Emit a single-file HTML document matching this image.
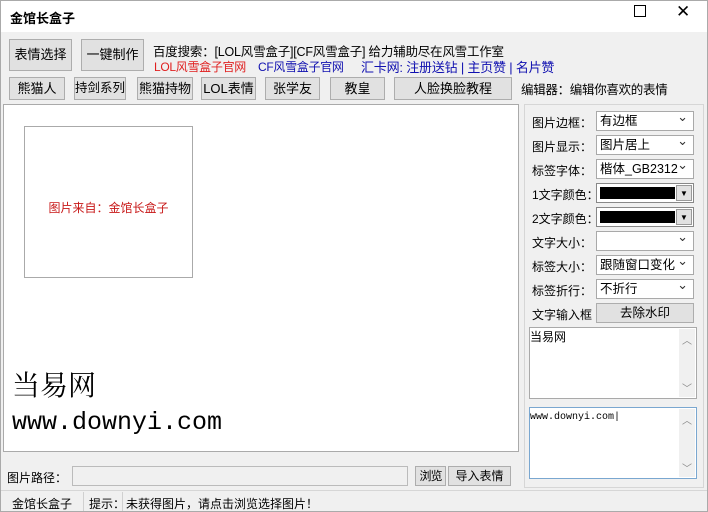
<!DOCTYPE html>
<html><head><meta charset="utf-8"><style>
*{margin:0;padding:0;box-sizing:border-box}
body{width:708px;height:512px;background:#f0f0f0;font-family:"Liberation Sans","Noto Sans CJK SC",sans-serif;font-size:12px;color:#000;position:relative;overflow:hidden}
.a{position:absolute;white-space:nowrap}
.btn{position:absolute;background:#e1e1e1;border:1px solid #adadad;text-align:center;font-size:13px;white-space:nowrap;overflow:visible}
.sel{position:absolute;left:596px;width:98px;height:20px;background:#fff;border:1px solid #a9a9a9;font-size:12.5px;line-height:18px;padding-left:3px;white-space:nowrap}
.sel::after{content:"⌄";position:absolute;right:5px;top:-4px;font-size:13px;color:#333}
.lbl{position:absolute;left:532px;font-size:12px;white-space:nowrap}
.clr{position:absolute;left:596px;width:98px;height:20px;border:1px solid #888;background:#fff;padding:2px}
.clr i{display:block;position:absolute;left:3px;top:3px;width:75px;height:12px;background:#000}
.clr b{position:absolute;right:1px;top:1px;width:16px;height:16px;background:#e1e1e1;border:1px solid #999;font-size:8px;text-align:center;line-height:15px}
.ta{position:absolute;left:529px;width:168px;background:#fff;border:1px solid #a9a9a9}
.sb{position:absolute;right:1px;top:1px;bottom:1px;width:16px;background:#f0f0f0;color:#888;font-size:10px;text-align:center}
</style></head><body>
<div class="a" style="left:0;top:0;width:708px;height:32px;background:#fff"></div>
<div class="a" style="left:0;top:0;width:708px;height:512px;border:1px solid #aaa;pointer-events:none"></div>
<div class="a" style="left:10px;top:8px;font-size:13px;font-weight:bold">金馆长盒子</div>
<div class="a" style="left:634px;top:5px;width:12px;height:12px;border:1px solid #000"></div>
<div class="a" style="left:676px;top:2px;font-size:17px">✕</div>

<div class="btn" style="left:9px;top:39px;width:63px;height:32px;line-height:30px">表情选择</div>
<div class="btn" style="left:81px;top:39px;width:63px;height:32px;line-height:30px">一键制作</div>
<div class="a" style="left:153px;top:41px;font-size:12.5px;letter-spacing:-0.2px">百度搜索：[LOL风雪盒子][CF风雪盒子] 给力辅助尽在风雪工作室</div>
<div class="a" style="left:154px;top:58px;font-size:12px;color:#e02020;letter-spacing:-0.3px">LOL风雪盒子官网</div>
<div class="a" style="left:258px;top:58px;font-size:12px;color:#1010b0;letter-spacing:-0.3px">CF风雪盒子官网</div>
<div class="a" style="left:361px;top:57px;font-size:13px;color:#1010b0;letter-spacing:-0.2px">汇卡网: 注册送钻 | 主页赞 | 名片赞</div>

<div class="btn" style="left:9px;top:77px;width:56px;height:23px;line-height:21px">熊猫人</div>
<div class="btn" style="left:74px;top:77px;width:52px;height:23px;line-height:21px;font-size:12.5px">持剑系列</div>
<div class="btn" style="left:137px;top:77px;width:56px;height:23px;line-height:21px">熊猫持物</div>
<div class="btn" style="left:201px;top:77px;width:55px;height:23px;line-height:21px">LOL表情</div>
<div class="btn" style="left:265px;top:77px;width:55px;height:23px;line-height:21px">张学友</div>
<div class="btn" style="left:330px;top:77px;width:55px;height:23px;line-height:21px">教皇</div>
<div class="btn" style="left:394px;top:77px;width:118px;height:23px;line-height:21px">人脸换脸教程</div>
<div class="a" style="left:521px;top:79px;font-size:12.5px;letter-spacing:-0.3px">编辑器：编辑你喜欢的表情</div>

<div class="a" style="left:3px;top:104px;width:516px;height:348px;background:#fff;border:1px solid #aaa"></div>
<div class="a" style="left:24px;top:126px;width:169px;height:152px;border:1px solid #aaa"></div>
<div class="a" style="left:24px;top:199px;width:169px;text-align:center;color:#c81818;font-size:12px">图片来自：金馆长盒子</div>
<div class="a" style="left:12px;top:364px;font-size:28px;font-family:'Liberation Serif','Noto Serif CJK SC',serif">当易网</div>
<div class="a" style="left:12px;top:408px;font-size:25px;font-family:'Liberation Mono',monospace">www.downyi.com</div>

<div class="a" style="left:524px;top:104px;width:180px;height:384px;border:1px solid #d6d6d6"></div>
<div class="lbl" style="top:114px">图片边框：</div><div class="sel" style="top:111px">有边框</div>
<div class="lbl" style="top:138px">图片显示：</div><div class="sel" style="top:135px">图片居上</div>
<div class="lbl" style="top:162px">标签字体：</div><div class="sel" style="top:159px">楷体_GB2312</div>
<div class="lbl" style="top:186px">1文字颜色：</div><div class="clr" style="top:183px"><i></i><b>▼</b></div>
<div class="lbl" style="top:210px">2文字颜色：</div><div class="clr" style="top:207px"><i></i><b>▼</b></div>
<div class="lbl" style="top:234px">文字大小：</div><div class="sel" style="top:231px"></div>
<div class="lbl" style="top:258px">标签大小：</div><div class="sel" style="top:255px">跟随窗口变化</div>
<div class="lbl" style="top:282px">标签折行：</div><div class="sel" style="top:279px">不折行</div>
<div class="lbl" style="top:306px">文字输入框</div>
<div class="btn" style="left:596px;top:303px;width:98px;height:20px;line-height:18px;font-size:12.5px">去除水印</div>
<div class="ta" style="top:327px;height:72px"><span style="font-size:12px">当易网</span><div class="sb"><div style="margin-top:3px">︿</div><div style="position:absolute;bottom:2px;width:16px">﹀</div></div></div>
<div class="ta" style="top:407px;height:72px;border-color:#7aa7d0"><span style="font-size:10px;font-family:'Liberation Mono',monospace">www.downyi.com|</span><div class="sb"><div style="margin-top:3px">︿</div><div style="position:absolute;bottom:2px;width:16px">﹀</div></div></div>

<div class="a" style="left:7px;top:469px;font-size:12px">图片路径：</div>
<div class="a" style="left:72px;top:466px;width:336px;height:20px;background:#f0f0f0;border:1px solid #bbb"></div>
<div class="btn" style="left:415px;top:466px;width:31px;height:20px;line-height:18px;font-size:12px;letter-spacing:-1px">浏览</div>
<div class="btn" style="left:448px;top:466px;width:63px;height:20px;line-height:18px;font-size:12px">导入表情</div>

<div class="a" style="left:1px;top:490px;width:706px;height:1px;background:#d6d6d6"></div>
<div class="a" style="left:12px;top:495px;font-size:12px">金馆长盒子</div>
<div class="a" style="left:83px;top:492px;width:1px;height:19px;background:#d0d0d0"></div>
<div class="a" style="left:89px;top:495px;font-size:12px">提示：</div>
<div class="a" style="left:122px;top:492px;width:1px;height:19px;background:#d0d0d0"></div>
<div class="a" style="left:126px;top:495px;font-size:12px">未获得图片，请点击浏览选择图片！</div>
</body></html>
